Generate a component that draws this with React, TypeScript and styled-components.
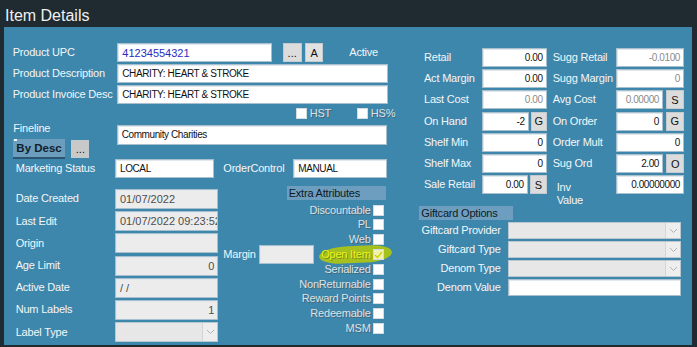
import React from 'react';
import styled, { createGlobalStyle } from 'styled-components';

const SANS = '"Liberation Sans", Arial, Helvetica, sans-serif';

const GlobalStyle = createGlobalStyle`
  html, body { margin: 0; padding: 0; background: #1f2a31; }
  body { font-family: ${SANS}; font-size: 11px; }
  * { box-sizing: border-box; }
`;

const Screen = styled.div`
  width: 697px;
  height: 347px;
  overflow: hidden;
  background: #1f2a31;
  display: flex;
  flex-direction: column;
`;

const TitleBar = styled.div`
  height: 27px;
  padding: 4px 0 0 5px;
  line-height: 23px;
  font-size: 16px;
  color: #f1f1f1;
`;

const Panel = styled.div`
  margin-left: 4px;
  width: 688px;
  height: 318px;
  background: #3d87ac;
  padding: 16px 0 0 8px;
  display: flex;
  align-items: flex-start;
`;

const LeftSection = styled.div`
  width: 376px;
  flex: 0 0 auto;
  display: flex;
  flex-direction: column;
`;

const RightSection = styled.div`
  margin-left: 31.3px;
  width: 265px;
  flex: 0 0 auto;
  display: flex;
  flex-direction: column;
`;

const Row = styled.div<{ $mt?: number; $h?: number }>`
  display: flex;
  align-items: center;
  margin-top: ${p => p.$mt ?? 0}px;
  height: ${p => (p.$h ? `${p.$h}px` : 'auto')};
`;

const Label = styled.span<{ $w?: number; $pl?: number; $ml?: number; $mt?: number }>`
  flex: 0 0 auto;
  width: ${p => (p.$w ? `${p.$w}px` : 'auto')};
  padding-left: ${p => p.$pl ?? 0}px;
  margin-left: ${p => p.$ml ?? 0}px;
  margin-top: ${p => p.$mt ?? 0}px;
  color: #f3f6f8;
  font-size: 11px;
  line-height: 13px;
  letter-spacing: -0.2px;
  white-space: nowrap;
`;

const Field = styled.div<{
  $w?: number;
  $h?: number;
  $grey?: boolean;
  $right?: boolean;
  $tone?: string;
  $narrow?: boolean;
  $flex?: boolean;
  $mt?: number;
}>`
  flex: ${p => (p.$flex ? '1 1 0' : '0 0 auto')};
  width: ${p => (p.$flex ? 'auto' : p.$w ? `${p.$w}px` : '100%')};
  min-width: 0;
  height: ${p => p.$h ?? 19}px;
  margin-top: ${p => p.$mt ?? 0}px;
  background: ${p => (p.$grey ? '#ececec' : '#ffffff')};
  border: 1px solid #a8bfce;
  box-shadow: inset 1px 1px 0 #e2e9ee;
  display: flex;
  align-items: center;
  justify-content: ${p => (p.$right ? 'flex-end' : 'flex-start')};
  padding: 0 3px 0 4px;
  font-size: ${p => (p.$narrow ? 10 : 11)}px;
  letter-spacing: ${p => (p.$narrow ? -0.4 : 0)}px;
  color: ${p => p.$tone ?? '#111'};
  white-space: nowrap;
  overflow: hidden;
`;

const SmallButton = styled.div<{ $w: number; $h?: number; $ml?: number; $tone?: string }>`
  flex: 0 0 auto;
  width: ${p => p.$w}px;
  height: ${p => p.$h ?? 19}px;
  margin-left: ${p => p.$ml ?? 0}px;
  background: ${p => p.$tone ?? '#dcdcdc'};
  border: 1px solid #c3cbd1;
  color: #111;
  font-size: 11px;
  display: flex;
  align-items: center;
  justify-content: center;
`;

const DescButton = styled.div`
  flex: 0 0 auto;
  position: relative;
  width: 52.7px;
  height: 20px;
  margin-left: 0.7px;
  background: #6c9dbd;
  border-bottom: 2px solid #2c5572;
  color: #10202c;
  font-weight: bold;
  font-size: 11.5px;
  display: flex;
  align-items: center;
  justify-content: center;
  &::before {
    content: '';
    position: absolute;
    left: 1px;
    top: 0px;
    width: 3px;
    height: 2px;
    background: #f4f8fb;
  }
`;

const CheckBox = styled.span<{ $ml?: number; $on?: boolean }>`
  flex: 0 0 auto;
  width: 11px;
  height: 11px;
  margin-left: ${p => p.$ml ?? 0}px;
  background: ${p => (p.$on ? '#f2f2b0' : '#ffffff')};
  border: 1px solid #d3dbe0;
  display: inline-flex;
  align-items: center;
  justify-content: center;
  position: relative;
  z-index: 1;
`;

const DimLabel = styled.span<{ $ml?: number; $mr?: number; $mark?: boolean }>`
  flex: 0 0 auto;
  margin-left: ${p => p.$ml ?? 0}px;
  margin-right: ${p => p.$mr ?? 0}px;
  font-size: 11px;
  line-height: 13px;
  letter-spacing: -0.2px;
  white-space: nowrap;
  color: ${p => (p.$mark ? '#eef21c' : '#dde2e5')};
  text-shadow: 1px 1px 0 ${p => (p.$mark ? 'rgba(110, 120, 30, 0.8)' : 'rgba(70, 90, 105, 0.75)')};
  position: relative;
  z-index: 1;
`;

const FinelineBlock = styled.div`
  display: flex;
  align-items: flex-start;
`;

const FinelineLeft = styled.div`
  width: 104.7px;
  flex: 0 0 auto;
  display: flex;
  flex-direction: column;
`;

const LowerBlock = styled.div`
  display: flex;
  align-items: flex-start;
`;

const InfoColumn = styled.div`
  width: 206.3px;
  flex: 0 0 auto;
  margin-top: 11px;
  display: flex;
  flex-direction: column;
  gap: 2.2px;
`;

const RightLower = styled.div`
  margin-top: 7.7px;
  display: grid;
  grid-template-columns: 41px 27.4px 27.6px 71.4px;
  align-items: start;
`;

const MarginGroup = styled.div`
  grid-column: 1 / 4;
  grid-row: 1;
  margin-top: 59px;
  display: flex;
  align-items: center;
`;

const AttrColumn = styled.div`
  grid-column: 3 / 5;
  grid-row: 1;
  display: flex;
  flex-direction: column;
`;

const SectionHeader = styled.div<{ $w?: number; $mt?: number }>`
  width: ${p => (p.$w ? `${p.$w}px` : '100%')};
  margin-top: ${p => p.$mt ?? 0}px;
  height: 14px;
  background: #6e9ebf;
  color: #0e1a22;
  font-size: 11px;
  line-height: 14px;
  padding-left: 2px;
  letter-spacing: -0.2px;
  white-space: nowrap;
`;

const AttrList = styled.div`
  margin-top: 3.1px;
  display: flex;
  flex-direction: column;
`;

const AttrRow = styled.div`
  height: 14.8px;
  display: flex;
  align-items: center;
  justify-content: flex-end;
  padding-right: 1.4px;
  position: relative;
`;

const Highlight = styled.span`
  position: absolute;
  left: 32px;
  right: -6px;
  top: -1.5px;
  bottom: -1px;
  background: #a6c01e;
  border-radius: 45% 30% 40% 35% / 60% 50% 60% 50%;
  transform: rotate(-2.5deg);
  z-index: 0;
`;

const SelectShell = styled.div<{ $w?: number; $h?: number; $ml?: number }>`
  flex: 0 0 auto;
  width: ${p => p.$w}px;
  height: ${p => p.$h ?? 17}px;
  margin-left: ${p => p.$ml ?? 0}px;
  background: #e7e7e7;
  border: 1px solid #b9c7d1;
  display: flex;
  justify-content: flex-end;
`;

const SelectArrow = styled.span`
  width: 15px;
  height: 100%;
  background: #eeeeee;
  border-left: 1px solid #d6d6d6;
  display: flex;
  align-items: center;
  justify-content: center;
`;

const PriceGrid = styled.div`
  margin-top: 4.7px;
  display: grid;
  grid-template-columns: 62.4px 65px 69px 68.3px;
  grid-auto-rows: 19px;
  row-gap: 2.3px;
  align-items: center;
`;

const PriceLabel = styled.span<{ $pl?: number }>`
  padding-left: ${p => p.$pl ?? 4.7}px;
  color: #f3f6f8;
  font-size: 11px;
  line-height: 13px;
  letter-spacing: -0.2px;
  white-space: nowrap;
`;

const StackedLabel = styled(PriceLabel)`
  align-self: start;
  padding-top: 5.7px;
  white-space: normal;
`;

const Pair = styled.div<{ $gap?: number }>`
  display: flex;
  align-items: center;
  gap: ${p => p.$gap ?? 2}px;
  height: 19px;
`;

const GiftList = styled.div`
  display: flex;
  flex-direction: column;
  gap: 2px;
  margin-top: 2.7px;
`;

const GiftLabel = styled.span`
  width: 81.4px;
  flex: 0 0 auto;
  text-align: right;
  color: #f3f6f8;
  font-size: 11px;
  line-height: 13px;
  letter-spacing: -0.2px;
  white-space: nowrap;
`;

const GiftInput = styled(Field)`
  margin-left: 7px;
`;

const Chevron = () => (
  <svg width="9" height="6" viewBox="0 0 9 6">
    <polyline points="1,1 4.5,4.5 8,1" fill="none" stroke="#b3b3b3" strokeWidth="1" />
  </svg>
);

const Tick = () => (
  <svg width="9" height="8" viewBox="0 0 9 8">
    <polyline points="1,4 3.5,6.5 8,1" fill="none" stroke="#d0d000" strokeWidth="1.4" />
  </svg>
);

const Select: React.FC<{ w: number; h?: number; ml?: number }> = ({ w, h, ml }) => (
  <SelectShell $w={w} $h={h} $ml={ml}>
    <SelectArrow>
      <Chevron />
    </SelectArrow>
  </SelectShell>
);

const infoRows: { label: string; value: string; right?: boolean }[] = [
  { label: 'Date Created', value: '01/07/2022' },
  { label: 'Last Edit', value: '01/07/2022 09:23:52' },
  { label: 'Origin', value: '' },
  { label: 'Age Limit', value: '0', right: true },
  { label: 'Active Date', value: '  / /' },
  { label: 'Num Labels', value: '1', right: true },
];

const attributes: { name: string; on?: boolean }[] = [
  { name: 'Discountable' },
  { name: 'PL' },
  { name: 'Web' },
  { name: 'Open Item', on: true },
  { name: 'Serialized' },
  { name: 'NonReturnable' },
  { name: 'Reward Points' },
  { name: 'Redeemable' },
  { name: 'MSM' },
];

const GREY = '#8a8a8a';

export default function App() {
  return (
    <Screen>
      <GlobalStyle />
      <TitleBar>Item Details</TitleBar>
      <Panel>
        <LeftSection>
          <Row $h={19}>
            <Label $w={105.3} $pl={0.7}>Product UPC</Label>
            <Field $w={155} $tone="#2b2bbf">41234554321</Field>
            <SmallButton $w={19} $ml={10.4}>...</SmallButton>
            <SmallButton $w={18.3} $ml={3.3} $tone="#e2e2e2">A</SmallButton>
            <Label $ml={26}>Active</Label>
          </Row>
          <Row $h={19} $mt={2}>
            <Label $w={105.3} $pl={0.7}>Product Description</Label>
            <Field $w={270.4} $narrow>CHARITY: HEART &amp; STROKE</Field>
          </Row>
          <Row $h={19} $mt={2}>
            <Label $w={105.3} $pl={0.7}>Product Invoice Desc</Label>
            <Field $w={270.4} $narrow>CHARITY: HEART &amp; STROKE</Field>
          </Row>
          <Row $h={11} $mt={4}>
            <CheckBox $ml={283.7} />
            <DimLabel $ml={3}>HST</DimLabel>
            <CheckBox $ml={26} />
            <DimLabel $ml={2.7}>HS%</DimLabel>
          </Row>
          <FinelineBlock>
            <FinelineLeft>
              <Label $pl={1.3} $mt={3.2}>Fineline</Label>
              <Row $mt={3.8}>
                <DescButton>By Desc</DescButton>
                <SmallButton $w={18} $h={18.4} $ml={6} $tone="#c9c9c9">...</SmallButton>
              </Row>
            </FinelineLeft>
            <Field $w={270.6} $h={20} $mt={5.7} $narrow>Community Charities</Field>
          </FinelineBlock>
          <Row $h={19}>
            <Label $w={103} $pl={3.7}>Marketing Status</Label>
            <Field $w={99.3} $narrow>LOCAL</Field>
            <Label $w={70} $ml={9}>OrderControl</Label>
            <Field $w={93.4} $narrow>MANUAL</Field>
          </Row>
          <LowerBlock>
            <InfoColumn>
              {infoRows.map(r => (
                <Row key={r.label} $h={20}>
                  <Label $w={103} $pl={3.7}>{r.label}</Label>
                  <Field $w={103.3} $h={20} $grey $right={r.right} $tone="#4d4d4d">
                    {r.value}
                  </Field>
                </Row>
              ))}
              <Row $h={20}>
                <Label $w={103} $pl={3.7}>Label Type</Label>
                <Select w={103.3} h={20} />
              </Row>
            </InfoColumn>
            <RightLower>
              <MarginGroup>
                <Label $w={41} $pl={5}>Margin</Label>
                <Field $w={55} $h={19} $grey />
              </MarginGroup>
              <AttrColumn>
                <SectionHeader>Extra Attributes</SectionHeader>
                <AttrList>
                  {attributes.map(a => (
                    <AttrRow key={a.name}>
                      {a.on && <Highlight />}
                      <DimLabel $mr={2.6} $mark={a.on}>{a.name}</DimLabel>
                      <CheckBox $on={a.on}>{a.on && <Tick />}</CheckBox>
                    </AttrRow>
                  ))}
                </AttrList>
              </AttrColumn>
            </RightLower>
          </LowerBlock>
        </LeftSection>

        <RightSection>
          <PriceGrid>
            <PriceLabel>Retail</PriceLabel>
            <Field $right $narrow>0.00</Field>
            <PriceLabel $pl={6}>Sugg Retail</PriceLabel>
            <Field $right $narrow $tone={GREY}>-0.0100</Field>

            <PriceLabel>Act Margin</PriceLabel>
            <Field $right $narrow>0.00</Field>
            <PriceLabel $pl={6}>Sugg Margin</PriceLabel>
            <Field $right $narrow $tone={GREY}>0</Field>

            <PriceLabel>Last Cost</PriceLabel>
            <Field $right $narrow $tone={GREY}>0.00</Field>
            <PriceLabel $pl={6}>Avg Cost</PriceLabel>
            <Pair $gap={2.7}>
              <Field $flex $right $narrow $tone={GREY}>0.00000</Field>
              <SmallButton $w={18.3}>S</SmallButton>
            </Pair>

            <PriceLabel>On Hand</PriceLabel>
            <Pair>
              <Field $flex $right $narrow>-2</Field>
              <SmallButton $w={16}>G</SmallButton>
            </Pair>
            <PriceLabel $pl={6}>On Order</PriceLabel>
            <Pair $gap={2.7}>
              <Field $flex $right $narrow>0</Field>
              <SmallButton $w={18.3}>G</SmallButton>
            </Pair>

            <PriceLabel>Shelf Min</PriceLabel>
            <Field $right $narrow>0</Field>
            <PriceLabel $pl={6}>Order Mult</PriceLabel>
            <Field $right $narrow>0</Field>

            <PriceLabel>Shelf Max</PriceLabel>
            <Field $right $narrow>0</Field>
            <PriceLabel $pl={6}>Sug Ord</PriceLabel>
            <Pair $gap={3.4}>
              <Field $flex $right $narrow>2.00</Field>
              <SmallButton $w={17.6}>O</SmallButton>
            </Pair>

            <PriceLabel>Sale Retail</PriceLabel>
            <Pair $gap={2.3}>
              <Field $flex $right $narrow>0.00</Field>
              <SmallButton $w={16.7}>S</SmallButton>
            </Pair>
            <StackedLabel $pl={10}>
              Inv
              <br />
              Value
            </StackedLabel>
            <Field $right $narrow>0.00000000</Field>
          </PriceGrid>

          <SectionHeader $w={93.4} $mt={11.2}>Giftcard Options</SectionHeader>
          <GiftList>
            <Row $h={17}>
              <GiftLabel>Giftcard Provider</GiftLabel>
              <Select w={173.4} ml={7} />
            </Row>
            <Row $h={17}>
              <GiftLabel>Giftcard Type</GiftLabel>
              <Select w={173.4} ml={7} />
            </Row>
            <Row $h={17}>
              <GiftLabel>Denom Type</GiftLabel>
              <Select w={173.4} ml={7} />
            </Row>
            <Row $h={17}>
              <GiftLabel>Denom Value</GiftLabel>
              <GiftInput $w={173.4} $h={17} />
            </Row>
          </GiftList>
        </RightSection>
      </Panel>
    </Screen>
  );
}
